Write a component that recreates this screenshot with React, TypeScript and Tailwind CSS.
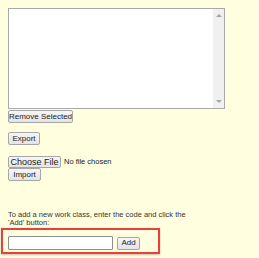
const font = { fontFamily: '"Liberation Sans", Arial, sans-serif' };

function Btn({ label, className = '' }: { label: string; className?: string }) {
  return (
    <button
      type="button"
      className={
        'flex items-center justify-center whitespace-nowrap rounded-[2px] border border-[#a6a6a6] bg-gradient-to-b from-[#f6f6f6] to-[#e4e4e4] px-0 text-[8px] leading-none text-[#222] ' +
        className
      }
    >
      {label}
    </button>
  );
}

function Arrow({ down }: { down?: boolean }) {
  return (
    <div
      className={
        'h-0 w-0 border-x-[3px] border-x-transparent ' +
        (down ? 'border-t-[3px] border-t-[#a3a3a3]' : 'border-b-[3px] border-b-[#a3a3a3]')
      }
    />
  );
}

export default function App() {
  return (
    <div className="h-[258px] w-[259px] bg-[#ffffe0] pt-[8px]" style={font}>
      <div className="pl-[8px]">
        <div className="flex h-[101px] w-[217px] border border-[#a9a9a9] bg-white">
          <div className="flex-1" />
          <div className="flex w-[11px] flex-col items-center justify-between bg-[#f0f0f0] py-[5px]">
            <Arrow />
            <Arrow down />
          </div>
        </div>
        <Btn label="Remove Selected" className="mt-[1px] h-[13px] w-[65px]" />
        <Btn label="Export" className="mt-[9px] h-[13px] w-[32px]" />
        <div className="mt-[11px] flex items-center gap-[3px]">
          <Btn label="Choose File" className="h-[12px] w-[53px] text-[9px]" />
          <span className="text-[7.5px] text-[#222]">No file chosen</span>
        </div>
        <Btn label="Import" className="h-[13px] w-[33px]" />
        <p className="mt-[30px] w-[180px] text-[7.5px] leading-[8px] text-[#333]">
          To add a new work class, enter the code and click the 'Add' button:
        </p>
      </div>
      <div className="ml-[1px] mt-[1px] flex h-[26px] w-[159px] items-center gap-[4px] border-2 border-[#e8403f] pl-[5px] pt-[4px] shadow-[0_1px_2px_rgba(0,0,0,0.25)]">
        <input
          type="text"
          className="h-[14px] w-[105px] rounded-[1px] border border-[#8f8f8f] bg-white outline-none"
        />
        <Btn label="Add" className="h-[13px] w-[23px]" />
      </div>
    </div>
  );
}
